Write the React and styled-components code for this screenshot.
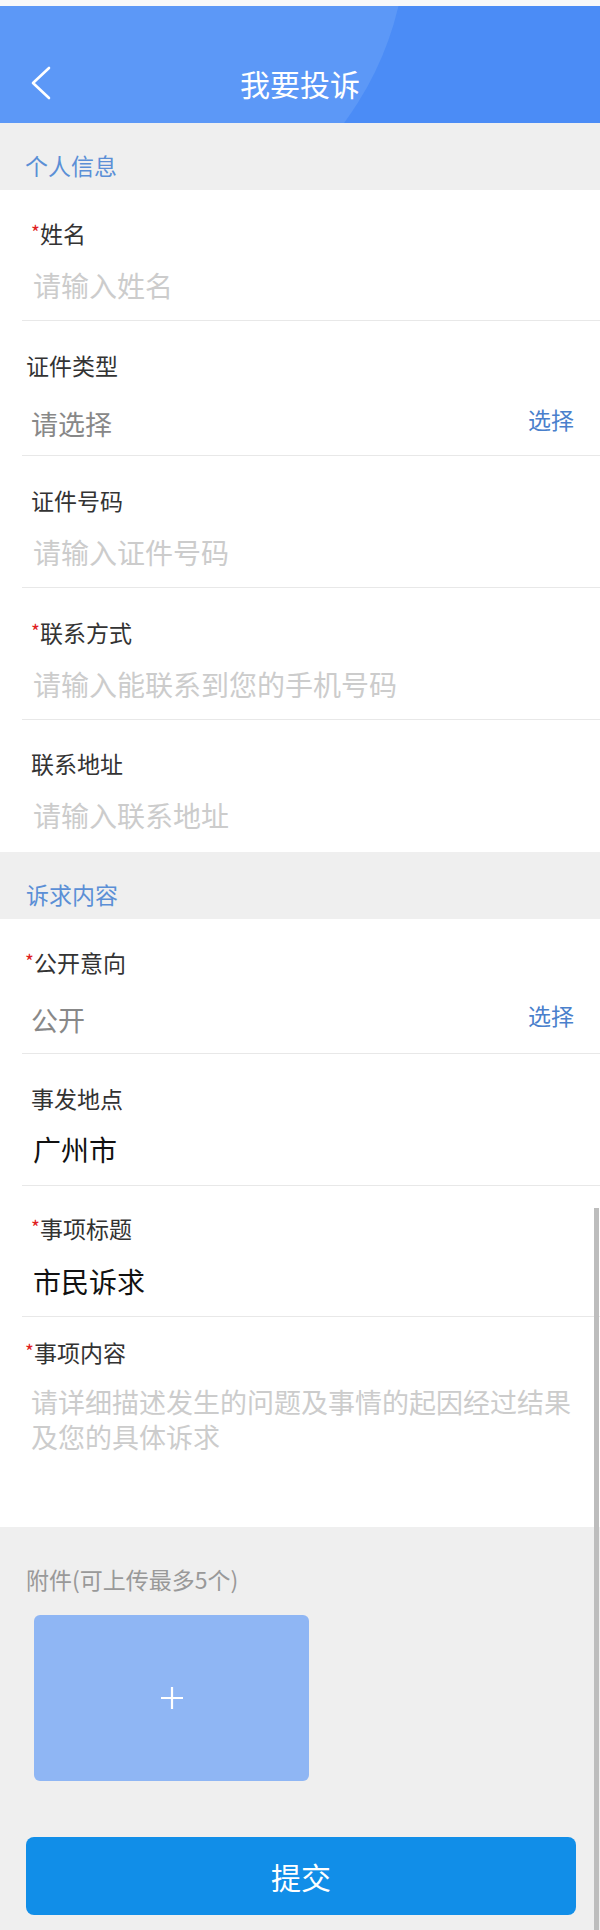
import React from 'react';
import styled, { createGlobalStyle } from 'styled-components';

const GlobalStyle = createGlobalStyle`
  html, body {
    margin: 0;
    padding: 0;
    background: #efefef;
  }
  body {
    font-family: "Noto Sans CJK SC", "Noto Sans", sans-serif;
  }
`;

const Page = styled.div`
  position: relative;
  width: 600px;
  height: 1930px;
  background: #efefef;
  overflow: hidden;
`;

const StatusStrip = styled.div`
  height: 6px;
  background: #f7f8fa;
`;

const Header = styled.header`
  position: relative;
  height: 117px;
  background: #4b8cf6;
  overflow: hidden;
  display: flex;
  align-items: flex-end;
  padding-bottom: 20px;
  box-sizing: border-box;

  &::before {
    content: '';
    position: absolute;
    left: -405px;
    top: -412px;
    width: 811px;
    height: 691px;
    border-radius: 50%;
    background: #5c98f7;
  }
`;

const NavRow = styled.div`
  position: relative;
  z-index: 1;
  width: 100%;
  display: grid;
  grid-template-columns: 1fr auto 1fr;
  align-items: center;
`;

const BackButton = styled.div`
  padding-left: 31px;
  height: 40px;
  display: flex;
  align-items: center;
`;

const Title = styled.h1`
  margin: 0;
  font-size: 30px;
  line-height: 40px;
  font-weight: 400;
  color: #fff;
`;

const SectionHead = styled.div`
  height: 67px;
  box-sizing: border-box;
  padding: 29px 0 0 ${(p) => p.$left || 25}px;
  font-size: 23px;
  line-height: 26px;
  color: #5b8fd6;
`;

const Card = styled.div`
  background: #fff;
`;

const Field = styled.div`
  margin-left: 22px;
  height: ${(p) => p.$h || 132}px;
  box-sizing: border-box;
  padding: ${(p) => p.$top || 30}px 26px 0 9px;
  border-bottom: ${(p) => (p.$last ? 'none' : '1px solid #e8e8e8')};
`;

const Label = styled.div`
  font-size: 23px;
  line-height: 26px;
  color: #333;
  margin-left: ${(p) => p.$shift || 0}px;
  white-space: nowrap;
`;

const Star = styled.span`
  display: inline-block;
  width: 9px;
  font-size: 19px;
  line-height: 19px;
  vertical-align: top;
  margin-top: 2px;
  color: #e02020;
`;

const ValueRow = styled.div`
  margin-top: ${(p) => p.$gap || 19}px;
  height: 40px;
  display: flex;
  align-items: center;
  justify-content: space-between;
`;

const Value = styled.div`
  font-size: ${(p) => (p.$kind === 'picked' ? 27 : 28)}px;
  line-height: 40px;
  margin-left: ${(p) => (p.$kind === 'picked' ? 0 : 2)}px;
  color: ${(p) =>
    p.$kind === 'filled' ? '#111' : p.$kind === 'picked' ? '#888' : '#cccccc'};
`;

const Pick = styled.span`
  font-size: 23px;
  line-height: 26px;
  color: #4a80cc;
  margin-bottom: 10px;
`;

const AreaText = styled.div`
  margin-top: 19px;
  font-size: 27px;
  line-height: 35px;
  color: #cccccc;
`;

const Attach = styled.div`
  padding: 37px 25px 15px 26px;
`;

const AttachLabel = styled.div`
  font-size: 23px;
  line-height: 30px;
  color: #999;
`;

const UploadBox = styled.div`
  margin: 21px 0 0 8px;
  width: 275px;
  height: 166px;
  border-radius: 6px;
  background: #8fb6f4;
  display: flex;
  align-items: center;
  justify-content: center;
`;

const SubmitButton = styled.button`
  display: block;
  margin-top: 56px;
  width: 550px;
  height: 78px;
  border: none;
  border-radius: 8px;
  background: #118ee8;
  color: #fff;
  font-family: inherit;
  font-size: 30px;
  line-height: 78px;
  padding: 0;
`;

const ScrollThumb = styled.div`
  position: absolute;
  right: 1px;
  top: 1208px;
  bottom: 0;
  width: 5px;
  background: #bdbdbd;
`;

const ChevronLeft = () => (
  <svg width="20" height="34" viewBox="0 0 20 34" fill="none">
    <polyline points="18,2 2,17 18,32" stroke="#fff" strokeWidth="2.6" strokeLinecap="round" strokeLinejoin="round" />
  </svg>
);

const Plus = () => (
  <svg width="24" height="24" viewBox="0 0 24 24">
    <path d="M12 1v22M1 12h22" stroke="#fff" strokeWidth="2.2" />
  </svg>
);

const personal = [
  { label: '姓名', req: true, value: '请输入姓名', h: 131, top: 30 },
  { label: '证件类型', shift: -5, value: '请选择', kind: 'picked', pick: true, h: 135, top: 31, gap: 26 },
  { label: '证件号码', value: '请输入证件号码', top: 31 },
  { label: '联系方式', req: true, value: '请输入能联系到您的手机号码', top: 31 },
  { label: '联系地址', value: '请输入联系地址', last: true },
];

const appeal = [
  { label: '公开意向', req: true, shift: -6, value: '公开', kind: 'picked', pick: true, h: 135, gap: 25 },
  { label: '事发地点', value: '广州市', kind: 'filled', top: 31, gap: 18 },
  { label: '事项标题', req: true, value: '市民诉求', kind: 'filled', h: 131, top: 29, gap: 20 },
];

const FormField = ({ f }) => (
  <Field $h={f.h} $top={f.top} $last={f.last}>
    <Label $shift={f.shift}>
      {f.req && <Star>*</Star>}
      {f.label}
    </Label>
    <ValueRow $gap={f.gap}>
      <Value $kind={f.kind}>{f.value}</Value>
      {f.pick && <Pick>选择</Pick>}
    </ValueRow>
  </Field>
);

export default function App() {
  return (
    <Page>
      <GlobalStyle />
      <StatusStrip />
      <Header>
        <NavRow>
          <BackButton>
            <ChevronLeft />
          </BackButton>
          <Title>我要投诉</Title>
          <div />
        </NavRow>
      </Header>

      <SectionHead>个人信息</SectionHead>
      <Card>
        {personal.map((f) => (
          <FormField key={f.label} f={f} />
        ))}
      </Card>

      <SectionHead $left={26}>诉求内容</SectionHead>
      <Card>
        {appeal.map((f) => (
          <FormField key={f.label} f={f} />
        ))}
        <Field $h={210} $top={22} $last>
          <Label $shift={-6}>
            <Star>*</Star>事项内容
          </Label>
          <AreaText>请详细描述发生的问题及事情的起因经过结果及您的具体诉求</AreaText>
        </Field>
      </Card>

      <Attach>
        <AttachLabel>附件(可上传最多5个)</AttachLabel>
        <UploadBox>
          <Plus />
        </UploadBox>
        <SubmitButton>提交</SubmitButton>
      </Attach>

      <ScrollThumb />
    </Page>
  );
}
